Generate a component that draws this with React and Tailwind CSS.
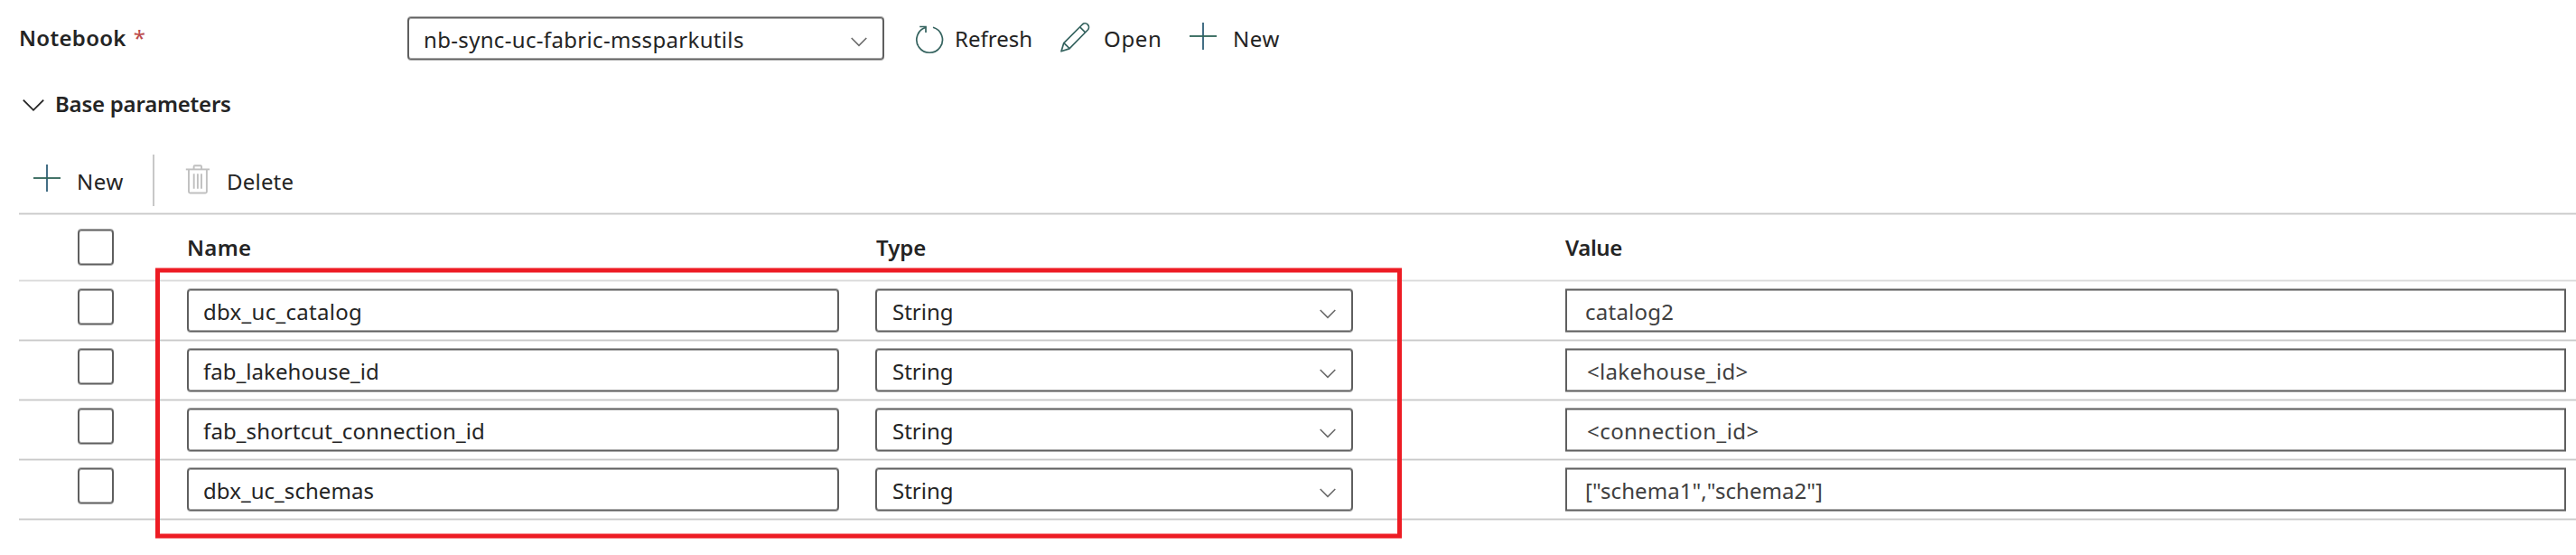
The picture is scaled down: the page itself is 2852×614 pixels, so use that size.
const FIELD =
  "border-x-2 border-y border-[#5f5f5f] shadow-[0_1px_#a9a9a9,0_-1px_#a9a9a9,inset_0_1px_#a9a9a9,inset_0_-1px_#a9a9a9]";

const rows = [
  { name: "dbx_uc_catalog", nameTracking: "tracking-[0.29px]", value: "catalog2", valueTracking: "tracking-[0.25px]" },
  { name: "fab_lakehouse_id", nameTracking: "tracking-[0.05px]", value: "<lakehouse_id>", valueTracking: "tracking-[0.3px] pl-[2px]" },
  { name: "fab_shortcut_connection_id", nameTracking: "tracking-[0.12px]", value: "<connection_id>", valueTracking: "tracking-[0.44px] pl-[2px]" },
  { name: "dbx_uc_schemas", nameTracking: "tracking-[0.06px]", value: '["schema1","schema2"]', valueTracking: "tracking-[0.05px]" },
];

function PlusIcon() {
  return (
    <svg className="block size-[32px] shrink-0" viewBox="0 0 32 32" fill="none">
      <path d="M16 1V31" stroke="#2f5f78" strokeWidth="1.8" />
      <path d="M1 16H31" stroke="#2f6558" strokeWidth="1.8" />
    </svg>
  );
}

function RefreshIcon() {
  return (
    <svg className="block size-[32px] shrink-0" viewBox="0 0 32 32" fill="none" stroke="#35635f" strokeWidth="1.7">
      <path d="M20 2.2A14.3 14.3 0 1 1 12.3 2.2" />
      <path d="M5.2 1.5H12V8" />
    </svg>
  );
}

function PencilIcon() {
  return (
    <svg className="block size-[34px] shrink-0" viewBox="0 0 34 34" fill="none" stroke="#35635f" strokeWidth="1.7" strokeLinejoin="round">
      <path d="M1 31.8L3.8 22.6L24.4 2A4.25 4.25 0 0 1 30.4 8L9.9 28.9Z" />
      <path d="M21.6 4.8L27.6 10.9" />
      <path d="M3.8 22.6C5.6 24.2 8.6 26.6 9.9 28.9" />
    </svg>
  );
}

function TrashIcon() {
  return (
    <svg className="block h-[34px] w-[28px] shrink-0" viewBox="0 0 28 34" fill="none" stroke="#c0c0c0" strokeWidth="1.9">
      <path d="M.8 6.4H27" />
      <path d="M9.6 6V3.4Q9.6 2.3 10.7 2.3H17Q18.1 2.3 18.1 3.4V6" />
      <path d="M4 6.6V31Q4 32.5 5.5 32.5H22.4Q23.9 32.5 23.9 31V6.6" />
      <path d="M9.7 11.3V27.7M13.9 11.3V27.7M18 11.3V27.7" />
    </svg>
  );
}

function SmallChevron() {
  return (
    <svg className="block h-[12px] w-[18px] shrink-0" viewBox="0 0 18 12" fill="none">
      <path d="M.7 1L9 9.4L17.3 1" stroke="#6a6a6a" strokeWidth="1.6" />
    </svg>
  );
}

function Select({ text, className, tracking }) {
  return (
    <div className={`flex h-[47px] items-start justify-between rounded-[4px] pl-4 pr-[17px] ${FIELD} ${className}`}>
      <span className={`mt-[7px] ${tracking}`}>{text}</span>
      <span className="mt-[21px]">
        <SmallChevron />
      </span>
    </div>
  );
}

function Checkbox({ className }) {
  return <div className={`h-[39px] w-[40px] rounded-[4px] ${FIELD} ${className}`} />;
}

function Rule({ header }) {
  return (
    <div className={header ? "bg-[#f0f0f0] py-px" : "bg-[#e8e8e8] py-px"}>
      <div className={header ? "h-px bg-[#dadada]" : "h-px bg-[#c9c9c9]"} />
    </div>
  );
}

const COLUMNS = "grid grid-cols-[65px_121px_762px_764px_1108px]";

export default function App() {
  return (
    <div className="relative h-[614px] w-[2852px] overflow-hidden bg-white pl-[21px] font-['Noto_Sans',sans-serif] text-[24px] leading-[33px] whitespace-nowrap text-[#242424]">
      <div className="flex h-[85px] items-start">
        <div className="mt-[25px] w-[430px] font-semibold tracking-[0.3px]">
          Notebook<span className="ml-2 font-normal text-[#bc4b4b]">*</span>
        </div>
        <Select text="nb-sync-uc-fabric-mssparkutils" className="mt-[19px] w-[528px]" tracking="tracking-[0.33px]" />
        <div className="mt-[26px] flex items-start">
          <div className="ml-[34px] flex w-[161px] items-start">
            <span className="mt-[2px]"><RefreshIcon /></span>
            <span className="ml-[12px]">Refresh</span>
          </div>
          <div className="flex w-[142px] items-start">
            <span className="-mt-px"><PencilIcon /></span>
            <span className="ml-[14px] tracking-[0.65px]">Open</span>
          </div>
          <div className="flex items-start">
            <span className="-mt-[2px]"><PlusIcon /></span>
            <span className="ml-[17px] tracking-[0.6px]">New</span>
          </div>
        </div>
      </div>

      <div className="flex h-[86px] items-start pt-[13px]">
        <svg className="mt-[11px] ml-[4px] block h-[16px] w-[24px]" viewBox="0 0 24 16" fill="none">
          <path d="M.8 1.6L12 12.8L23.2 1.6" stroke="#242424" strokeWidth="1.8" />
        </svg>
        <span className="ml-[12px] font-semibold tracking-[-0.23px]">Base parameters</span>
      </div>

      <div className="flex h-[64px] items-start">
        <span className="mt-[10px] ml-[15px]"><PlusIcon /></span>
        <span className="mt-[13px] ml-[17px] w-[84px] tracking-[0.6px]">New</span>
        <span className="h-[57px] w-[2px] bg-[#c8c8c8]" />
        <span className="mt-[10px] ml-[34px]"><TrashIcon /></span>
        <span className="mt-[13px] ml-[18px] tracking-[0.21px]">Delete</span>
      </div>

      <Rule />
      <div className={`${COLUMNS} h-[71px] font-semibold`}>
        <span />
        <Checkbox className="mt-[16px]" />
        <span className="mt-[19px] tracking-[0.3px]">Name</span>
        <span className="mt-[19px] pl-px">Type</span>
        <span className="mt-[19px] tracking-[-0.38px]">Value</span>
      </div>
      <Rule header />

      {rows.map((row) => (
        <div key={row.name}>
          <div className={`${COLUMNS} h-[63px]`}>
            <span />
            <Checkbox className="mt-[8px]" />
            <div className={`mt-[8px] h-[47px] w-[722px] rounded-[4px] pt-[7px] pl-[16px] ${FIELD}`}>
              <span className={row.nameTracking}>{row.name}</span>
            </div>
            <Select text="String" className="mt-[8px] w-[529px]" tracking="pl-px" />
            <div className={`mt-[8px] h-[47px] w-[1108px] pt-[7px] pl-[20px] text-[#404040] ${FIELD}`}>
              <span className={row.valueTracking}>{row.value}</span>
            </div>
          </div>
          <Rule />
        </div>
      ))}

      <div className="absolute top-[297px] left-[172px] h-[298px] w-[1380px] border-x-5 border-y-4 border-[#ed1c24] shadow-[0_1px_#f6898d,0_-1px_#f6898d,inset_0_1px_#f6898d,inset_0_-1px_#f6898d]" />
    </div>
  );
}
